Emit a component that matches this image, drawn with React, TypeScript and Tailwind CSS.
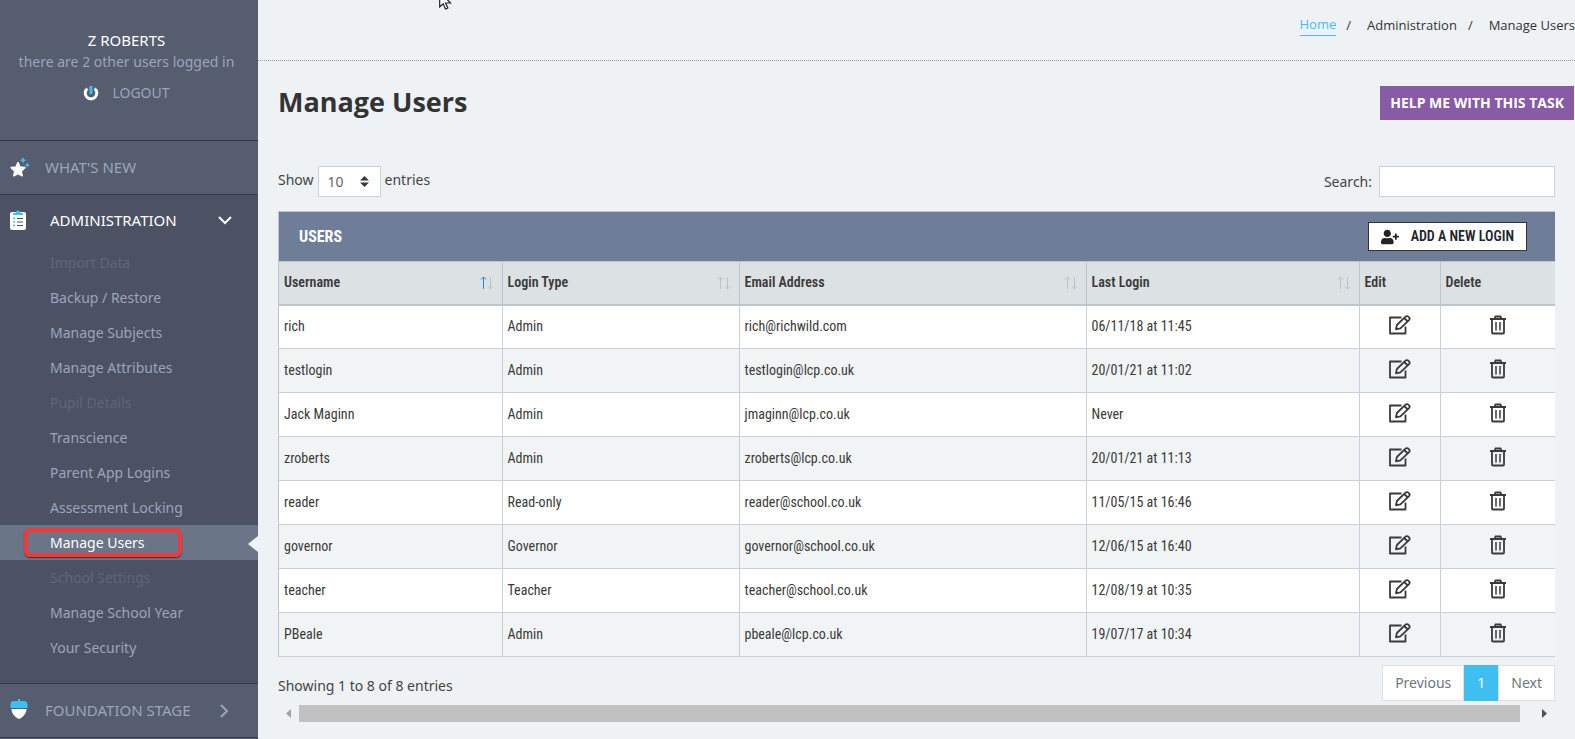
import React from 'react';
import { FaUserPlus } from 'react-icons/fa';

const adminLinks = [
  { label: 'Import Data', disabled: true },
  { label: 'Backup / Restore' },
  { label: 'Manage Subjects' },
  { label: 'Manage Attributes' },
  { label: 'Pupil Details', disabled: true },
  { label: 'Transcience' },
  { label: 'Parent App Logins' },
  { label: 'Assessment Locking' },
  { label: 'Manage Users', active: true },
  { label: 'School Settings', disabled: true },
  { label: 'Manage School Year' },
  { label: 'Your Security' },
];

const users = [
  { username: 'rich', type: 'Admin', email: 'rich@richwild.com', lastLogin: '06/11/18 at 11:45' },
  { username: 'testlogin', type: 'Admin', email: 'testlogin@lcp.co.uk', lastLogin: '20/01/21 at 11:02' },
  { username: 'Jack Maginn', type: 'Admin', email: 'jmaginn@lcp.co.uk', lastLogin: 'Never' },
  { username: 'zroberts', type: 'Admin', email: 'zroberts@lcp.co.uk', lastLogin: '20/01/21 at 11:13' },
  { username: 'reader', type: 'Read-only', email: 'reader@school.co.uk', lastLogin: '11/05/15 at 16:46' },
  { username: 'governor', type: 'Governor', email: 'governor@school.co.uk', lastLogin: '12/06/15 at 16:40' },
  { username: 'teacher', type: 'Teacher', email: 'teacher@school.co.uk', lastLogin: '12/08/19 at 10:35' },
  { username: 'PBeale', type: 'Admin', email: 'pbeale@lcp.co.uk', lastLogin: '19/07/17 at 10:34' },
];

const PowerIcon = () => (
  <svg width="16" height="16" viewBox="0 0 16 16" fill="none">
    <path d="M4.4 3.6a5.8 5.8 0 1 0 7.2 0" stroke="#fff" strokeWidth="3" />
    <path d="M8 1v8" stroke="#3fbff0" strokeWidth="3" />
  </svg>
);

const StarIcon = () => (
  <svg width="20" height="20" viewBox="0 0 20 20">
    <path
      d="M8 5.6l2 4.4 4.8.6-3.6 3.5 1 4.7L8 16.6l-4.2 2.200 1-4.700L1.200 10.600l4.800-.6z"
      fill="#fff"
      stroke="#fff"
      strokeWidth="1.500"
      strokeLinejoin="round"
    />
    <path
      d="M13 0l1.100 2.200 2.200 1-2.200 1L13 6.400l-1.100-2.200-2.200-1 2.200-1zM17.300 5.400l.9 1.900 1.800.9-1.800.9-.9 1.900-.9-1.900-1.800-.9 1.800-.9z"
      fill="#3fbff0"
    />
  </svg>
);

const ClipboardIcon = () => (
  <svg width="16" height="20" viewBox="0 0 16 20">
    <rect x="0" y="2" width="16" height="18" rx="2" fill="#fff" />
    <path d="M3 5V3h2.5a2.5 2.5 0 0 1 5 0H13v2z" fill="#3fbff0" />
    <path d="M3 8.5h2M3 12h2M3 15.5h2" stroke="#3fbff0" strokeWidth="1.5" />
    <path d="M7 8.5h6M7 12h6M7 15.5h6" stroke="#4c5264" />
  </svg>
);

const AcornIcon = () => (
  <svg width="18" height="20" viewBox="0 0 18 20">
    <path d="M8 0h2v2h4a3.500 3.500 0 0 1 3.500 3.500V9H.5V5.500A3.500 3.500 0 0 1 4 2h4z" fill="#3fbff0" />
    <path d="M1.500 10h15c0 4-3 8-7.500 10-4.500-2-7.500-6-7.500-10z" fill="#fff" />
  </svg>
);

const EditIcon = () => (
  <svg width="22" height="20" viewBox="0 0 22 20" fill="none" stroke="#3a3a3a" strokeWidth="1.8" strokeLinejoin="round">
    <path d="M12.5 2.5H1v16h15.500v-7" />
    <path d="M7 14.3l.9-4.3 8.6-8.3a2 2 0 0 1 2.900 0l.6.6a2 2 0 0 1 0 2.800l-8.600 8.300z" />
    <path d="M15.2 3l3.6 3.5" />
  </svg>
);

const TrashIcon = () => (
  <svg width="16" height="20" viewBox="0 0 16 20" fill="none" stroke="#3a3a3a" strokeWidth="1.8">
    <path d="M0 4h16M4.5 4l1-2.5h5l1 2.5M2 4v13.5a1 1 0 0 0 1 1h10a1 1 0 0 0 1-1V4" />
    <path d="M6 7v8.5M10 7v8.5" strokeWidth="1.5" />
  </svg>
);

const SortIcon = ({ active = false }: { active?: boolean }) => (
  <svg width="14" height="14" viewBox="0 0 14 14" fill="none">
    <path d="M3.5 13V1M1 3.5L3.5 1 6 3.5" stroke={active ? '#2f86d0' : '#bcc1c4'} />
    <path d="M10.5 1v12M8 10.5l2.5 2.5 2.5-2.5" stroke="#bcc1c4" />
  </svg>
);

const Sidebar = () => (
  <aside className="w-[258px] shrink-0 bg-[#555d6f] text-[15px] leading-[21px] text-[#9ba5bd]">
    <div className="h-[140px] pt-[30px] pr-[5px] text-center">
      <p className="text-white">Z ROBERTS</p>
      <p className="text-[14px] whitespace-nowrap">there are 2 other users logged in</p>
      <a href="#" className="mt-[10px] flex items-center justify-center gap-[13px] text-[14px]">
        <PowerIcon />
        LOGOUT
      </a>
    </div>
    <nav>
      <a href="#" className="flex h-[54px] items-center border-t border-[#2f3b4d] pl-[10px]">
        <span className="w-[35px] pb-[2px]"><StarIcon /></span>
        WHAT'S NEW
      </a>
      <div className="border-t border-[#2f3b4d] bg-[#4c5264] pb-[18px]">
        <button className="flex h-[50px] w-full items-center pr-[26px] pl-[10px] text-left text-white">
          <span className="w-[40px]"><ClipboardIcon /></span>
          <span className="flex-1">ADMINISTRATION</span>
          <svg width="14" height="9" viewBox="0 0 14 9" fill="none" stroke="#fff" strokeWidth="2">
            <path d="M1 1l6 6 6-6" />
          </svg>
        </button>
        <ul className="text-[14px]">
          {adminLinks.map((link) => (
            <li key={link.label} className={link.active ? 'relative bg-[#6b7588]' : ''}>
              <a
                href="#"
                className={`block h-[35px] pl-[50px] leading-[35px] ${
                  link.active ? 'text-white' : link.disabled ? 'text-[#5f667a]' : ''
                }`}
              >
                {link.label}
              </a>
              {link.active && (
                <>
                  <span className="absolute top-[3px] left-[24px] h-[29px] w-[158px] rounded-md border-4 border-[#f03a3a] shadow-[0_1px_1px_#333]" />
                  <svg className="absolute top-[11px] right-0" width="10" height="16" viewBox="0 0 10 16">
                    <path d="M10 0v16L0 8z" fill="#eef2f5" />
                  </svg>
                </>
              )}
            </li>
          ))}
        </ul>
      </div>
      <a href="#" className="flex h-[54px] items-center border-t border-[#2f3b4d] pr-[29px] pl-[10px]">
        <span className="w-[35px] pb-[3px]"><AcornIcon /></span>
        <span className="flex-1">FOUNDATION STAGE</span>
        <svg width="9" height="14" viewBox="0 0 9 14" fill="none" stroke="#9ba5bd" strokeWidth="2">
          <path d="M1 1l6 6-6 6" />
        </svg>
      </a>
      <div className="h-[2px] border-t border-[#2f3b4d]" />
    </nav>
  </aside>
);

const UsersTable = () => (
  <div className="border-t border-l border-[#bcc6cc] font-['Roboto_Condensed','Roboto',sans-serif] text-[14px] text-[#3a3a3a]">
    <div className="flex h-[49px] items-center justify-between bg-[#6e7d98] pr-[28px] pl-5">
      <h2 className="text-[16px] font-bold text-white">USERS</h2>
      <button className="flex h-[29px] items-center gap-3 border border-[#333] bg-white px-3 font-semibold text-[#212529]">
        <FaUserPlus size={18} />
        ADD A NEW LOGIN
      </button>
    </div>
    <table className="w-full table-fixed border-collapse text-left">
      <thead>
        <tr className="h-[43px] border-t border-b-2 border-t-[#bcc6cc] border-b-[#bcc6cc] bg-[#dce1e3]">
          {['Username', 'Login Type', 'Email Address', 'Last Login'].map((name, i) => (
            <th
              key={name}
              className={`border-r border-[#bcc6cc] pr-2 pl-[5px] font-semibold ${['w-[223px]', 'w-[237px]', '', 'w-[273px]'][i]}`}
            >
              <div className="flex items-center justify-between">
                {name}
                <SortIcon active={i === 0} />
              </div>
            </th>
          ))}
          <th className="w-[81px] border-r border-[#bcc6cc] pl-[5px] font-semibold">Edit</th>
          <th className="w-[115px] pl-[5px] font-semibold">Delete</th>
        </tr>
      </thead>
      <tbody>
        {users.map((user) => (
          <tr key={user.username} className="h-[44px] border-b border-[#c9cfdc] bg-white even:bg-[#f0f4f5]">
            <td className="border-r border-[#c9cfdc] pl-[5px]">{user.username}</td>
            <td className="border-r border-[#c9cfdc] pl-[5px]">{user.type}</td>
            <td className="border-r border-[#c9cfdc] pl-[5px]">{user.email}</td>
            <td className="border-r border-[#c9cfdc] pl-[5px]">{user.lastLogin}</td>
            <td className="border-r border-[#c9cfdc] pb-1 text-center">
              <button aria-label="Edit" className="align-middle"><EditIcon /></button>
            </td>
            <td className="pb-1 text-center">
              <button aria-label="Delete" className="align-middle"><TrashIcon /></button>
            </td>
          </tr>
        ))}
      </tbody>
    </table>
  </div>
);

const App = () => {
  return (
    <div className="flex min-h-screen overflow-hidden bg-[#eef2f5] font-['Noto_Sans','Open_Sans',sans-serif] text-[14px] text-[#444]">
      <Sidebar />

      <main className="min-w-0 flex-1">
        <header className="flex h-[61px] items-center justify-end border-b border-dotted border-[#999] pb-[9px] font-['Open_Sans',sans-serif] text-[13px] text-[#333]">
          <a href="#" className="border-b border-[#3fbff0] text-[#3fbff0]">Home</a>
          <span className="mr-4 ml-[10px]">/</span>
          <a href="#">Administration</a>
          <span className="mr-4 ml-[11px]">/</span>
          <span>Manage Users</span>
        </header>

        <div className="pl-5">
          <div className="flex items-center justify-between pt-[25px] pr-px font-['Open_Sans',sans-serif]">
            <h1 className="pb-[2px] text-[27px] leading-[32px] font-bold text-[#333]">Manage Users</h1>
            <button className="h-[34px] bg-[#875ba5] px-[10px] pb-px font-bold text-white">HELP ME WITH THIS TASK</button>
          </div>

          <div className="pt-[46px] pr-5">
            <div className="mb-[14px] flex h-[31px] items-center justify-between">
              <label className="flex items-center gap-1">
                <span className="pb-1">Show</span>
                <span className="relative">
                  <select className="h-[31px] w-[63px] appearance-none rounded-none border border-[#ccd2dc] bg-white pl-[9px] text-[#666]">
                    <option>10</option>
                  </select>
                  <svg className="pointer-events-none absolute top-[10px] right-[12px]" width="9" height="11" viewBox="0 0 9 11">
                    <path d="M0 4.5L4.5 0 9 4.5zM0 6.5h9L4.5 11z" fill="#343a40" />
                  </svg>
                </span>
                <span className="pb-1">entries</span>
              </label>
              <label className="flex items-center gap-[7px]">
                Search:
                <input type="text" className="h-[31px] w-[176px] border border-[#ccd2dc] bg-white px-2" />
              </label>
            </div>

            <UsersTable />

            <div className="flex justify-between pt-2">
              <p className="pt-[10px]">Showing 1 to 8 of 8 entries</p>
              <div className="flex h-[36px] text-[#6c757d]">
                <button className="border border-[#dee2e6] bg-white px-3 pb-px">Previous</button>
                <button className="w-[34px] bg-[#3fbff0] pb-px text-white">1</button>
                <button className="border border-[#dee2e6] bg-white px-3 pb-px">Next</button>
              </div>
            </div>

            <div className="mt-1 flex h-[17px] items-center bg-[#f0f1f2]">
              <svg className="mx-2" width="5" height="9" viewBox="0 0 5 9">
                <path d="M5 0v9L0 4.5z" fill="#a3a3a3" />
              </svg>
              <div className="h-[17px] flex-1 bg-[#c1c1c1]" />
              <svg className="mr-2 ml-[22px]" width="5" height="9" viewBox="0 0 5 9">
                <path d="M0 0v9l5-4.500z" fill="#505050" />
              </svg>
            </div>
          </div>
        </div>
      </main>

      {/* mouse pointer */}
      <svg className="pointer-events-none absolute top-[-8px] left-[439px]" width="13" height="18" viewBox="0 0 13 18">
        <path d="M.7 0v15l3.5-3.2 2.3 5.2 2.3-1-2.2-5h4.900z" fill="#fff" stroke="#222" strokeWidth="1.2" />
      </svg>
    </div>
  );
};

export default App;
